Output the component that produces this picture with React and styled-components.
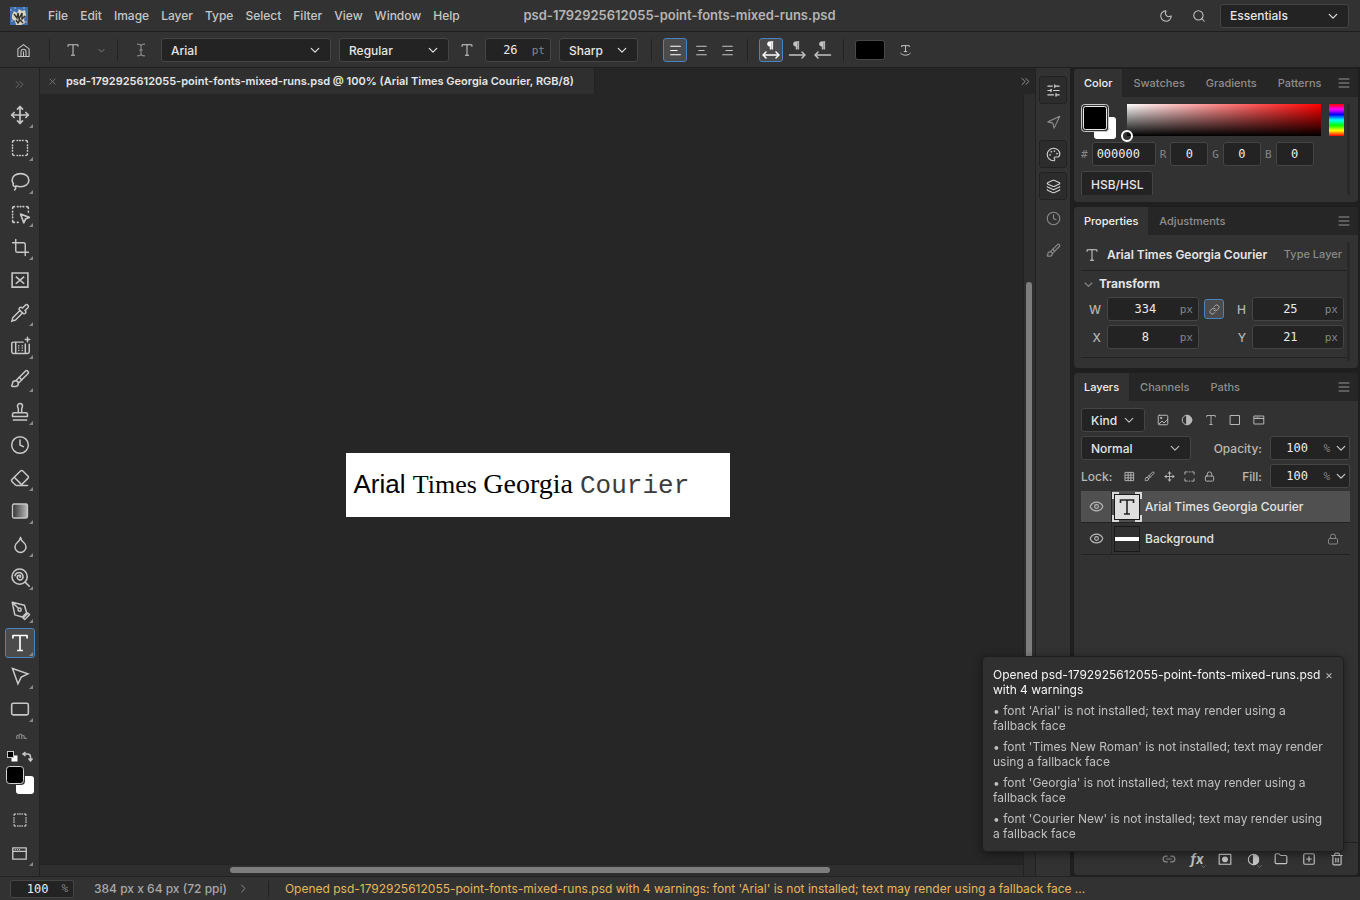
import React, { useState } from 'react';
import styled, { createGlobalStyle, css } from 'styled-components';
import {
  Search, Moon, SlidersHorizontal, Navigation, Palette, Layers, Clock, Brush, Move, Crop,
  Eraser, Droplet, Pipette, Link as LinkIcon, Link2, Lock, Eye, Trash2, Folder, SquarePlus,
} from 'lucide-react';

const mono = "'DejaVu Sans Mono', monospace";

const GlobalStyle = createGlobalStyle`
  * { box-sizing: border-box; }
  body {
    margin: 0;
    background: #323232;
    color: #dcdcdc;
    font: 500 12px/15px Inter, sans-serif;
  }
  button, input, select { font: inherit; color: inherit; margin: 0; }
  button { background: none; border: 0; padding: 0; cursor: pointer; }
  svg { display: block; flex: none; }
`;

const Shell = styled.div`
  display: grid;
  grid-template-rows: auto auto 1fr auto;
  height: 100vh;
  overflow: hidden;
`;

const MenuBar = styled.header`
  display: grid;
  grid-template-columns: 1fr auto 1fr;
  align-items: center;
  height: 32px;
  padding: 0 11px 0 10px;
  border-bottom: 1px solid #1e1e1e;
`;

const Menus = styled.nav`
  display: flex;
  align-items: center;
  color: #c6c6c6;
`;

const MenuItem = styled.button`
  padding: 0 6px;
  line-height: 24px;
`;

const Logo = styled.span`
  margin-right: 14px;
`;

const DocTitle = styled.h1`
  margin: 0;
  font-size: 13px;
  font-weight: 600;
  color: #b4b4b4;
`;

const MenuRight = styled.div`
  display: flex;
  justify-content: flex-end;
  align-items: center;
  gap: 9px;
`;

const IconButton = styled.button`
  display: grid;
  place-items: center;
  position: relative;
  width: ${({ $w }) => $w || 24}px;
  height: 24px;
  color: ${({ $dim }) => ($dim ? '#8c8c8c' : '#c4c4c4')};
  border: 1px solid transparent;
  border-radius: 3px;
  ${({ $active }) => $active && css`
    background: #4b4b4b;
    border-color: #4c82bd;
    color: #fff;
  `}
`;

const field = css`
  background: #232323;
  border: 1px solid #454545;
  border-radius: 3px;
`;

const SelectWrap = styled.span`
  position: relative;
  width: ${({ $w }) => $w}px;
  svg {
    position: absolute;
    right: 11px;
    top: 7px;
    pointer-events: none;
  }
`;

const NativeSelect = styled.select`
  ${field}
  display: block;
  appearance: none;
  width: 100%;
  height: 24px;
  padding: 0 9px;
  color: #e6e6e6;
`;

const OptionsBar = styled.div`
  display: flex;
  align-items: center;
  gap: 8px;
  height: 36px;
  padding: 1px 5px 0;
  border-bottom: 1px solid #1f1f1f;
`;

const Sep = styled.span`
  width: 1px;
  height: 22px;
  background: #222;
  margin: 0 3px 0 ${({ $wide }) => ($wide ? 5 : 0)}px;
`;

const ButtonSet = styled.div`
  display: flex;
  gap: 2px;
`;

const OptionIcon = styled.span`
  display: grid;
  place-items: center;
  width: 20px;
`;

const NumWrap = styled.label`
  ${field}
  display: flex;
  align-items: center;
  width: ${({ $w }) => $w}px;
  height: 24px;
  font: 11px ${mono};
  color: #858585;
  padding-left: 6px;
  padding-right: ${({ $arrow }) => ($arrow ? 3 : 5)}px;
  gap: ${({ $arrow }) => ($arrow ? 6 : 3)}px;
  svg { color: #c8c8c8; }
`;

const NumInput = styled.input`
  flex: 1;
  min-width: 0;
  width: 100%;
  padding: 0;
  border: 0;
  background: none;
  outline: 0;
  color: #ececec;
  font: 12px ${mono};
  text-align: center;
`;

const ColorChip = styled.button`
  width: 30px;
  height: 20px;
  background: #000;
  border: 1px solid #484848;
  border-radius: 3px;
`;

const Main = styled.div`
  display: grid;
  grid-template-columns: 40px minmax(0, 1fr) 36px 289px;
  min-height: 0;
`;

const Toolbar = styled.aside`
  display: flex;
  flex-direction: column;
  align-items: center;
  min-height: 0;
  border-right: 1px solid #222;
`;

const ToolList = styled.div`
  display: flex;
  flex-direction: column;
  flex: 1;
  gap: 3px;
  min-height: 0;
  overflow: hidden;
  width: 100%;
  padding-left: 5px;
`;

const ToolButton = styled.button`
  display: grid;
  place-items: center;
  position: relative;
  flex: none;
  width: 30px;
  height: 30px;
  color: ${({ $active, $dim }) => ($active ? '#fff' : $dim ? '#7c7c7c' : '#c8c8c8')};
  border: 1px solid ${({ $active }) => ($active ? '#4c82bd' : 'transparent')};
  background: ${({ $active }) => ($active ? '#4b4b4b' : 'none')};
  border-radius: 3px;
  ${({ $more }) => $more && css`
    &::after {
      content: '';
      position: absolute;
      right: 1px;
      bottom: 1px;
      border: 2px solid;
      border-color: transparent #8a8a8a #8a8a8a transparent;
    }
  `}
`;

const Expand = styled.button`
  height: 32px;
  color: #707070;
`;

const ToolFooter = styled.div`
  display: flex;
  flex-direction: column;
  align-items: center;
  gap: 3px;
  padding: 11px 0 8px;
`;

const SwatchSlot = styled.div`
  padding-bottom: 7px;
`;

const Document = styled.section`
  display: flex;
  flex-direction: column;
  min-width: 0;
  background: #262626;
`;

const TabStrip = styled.div`
  display: flex;
  justify-content: space-between;
  align-items: center;
  height: 26px;
  color: #a0a0a0;
  padding-right: 5px;
`;

const DocTab = styled.div`
  display: flex;
  align-items: center;
  gap: 10px;
  height: 26px;
  padding: 0 20px 0 9px;
  background: #2f2f2f;
  border-right: 1px solid #222;
  color: #e6e6e6;
  font-size: 11px;
  font-weight: 600;
  svg { color: #7c7c7c; }
`;

const Workspace = styled.div`
  position: relative;
  flex: 1;
  display: grid;
  place-items: center;
`;

const Artboard = styled.div`
  width: 384px;
  height: 64px;
  padding: 16px 8px;
  background: #fff;
  color: #000;
  font: 26px/30px 'Liberation Sans', sans-serif;
  white-space: pre;
`;

const Run = styled.span`
  font-family: ${({ $font }) => $font};
  font-size: ${({ $size }) => $size || 26}px;
  color: ${({ $color }) => $color || '#000'};
`;

const ScrollTrack = styled.div`
  position: absolute;
  background: #2e2e2e;
  ${({ $vertical }) => $vertical
    ? css`top: 0; right: 0; bottom: 0; width: 12px; border-left: 1px solid #222;`
    : css`left: 0; right: 12px; bottom: 0; height: 12px; border-top: 1px solid #222; padding: 2px 0;`}
`;

const Thumb = styled.div`
  background: #7d7d7d;
  border-radius: 3px;
  ${({ $vertical }) => $vertical
    ? css`position: absolute; left: 2px; top: 24%; width: 6px; height: 70%;`
    : css`height: 6px; width: 61%; margin-left: 190px;`}
`;

const Dock = styled.aside`
  display: flex;
  flex-direction: column;
  align-items: center;
  gap: 4px;
  padding-top: 8px;
  border-left: 1px solid #222;
  border-right: 1px solid #1f1f1f;
`;

const DockButton = styled.button`
  display: grid;
  place-items: center;
  width: 28px;
  height: 28px;
  border-radius: 3px;
  color: ${({ $open }) => ($open ? '#d2d2d2' : '#8a8a8a')};
  border: 1px solid ${({ $open }) => ($open ? '#222' : 'transparent')};
  background: ${({ $open }) => ($open ? '#2c2c2c' : 'none')};
`;

const Panels = styled.aside`
  display: flex;
  flex-direction: column;
  gap: 5px;
  min-height: 0;
  padding: 1px 2px 1px 3px;
  background: #1f1f1f;
`;

const Panel = styled.section`
  display: flex;
  flex-direction: column;
  flex: ${({ $h }) => ($h ? `0 0 ${$h}px` : 1)};
  min-height: 0;
  overflow: hidden;
  background: #323232;
  border-radius: 4px;
`;

const PanelTabs = styled.div`
  display: flex;
  align-items: center;
  height: 28px;
  flex: none;
  background: #262626;
  padding-right: 8px;
  font-size: 11px;
  svg { margin-left: auto; color: #a0a0a0; }
`;

const PanelTab = styled.button`
  height: 28px;
  padding: 0 10px;
  margin-right: 1px;
  color: ${({ $on }) => ($on ? '#f0f0f0' : '#8e8e8e')};
  background: ${({ $on }) => ($on ? '#323232' : 'none')};
`;

const PanelBody = styled.div`
  display: flex;
  flex-direction: column;
  flex: 1;
  min-height: 0;
  overflow: hidden;
  margin: ${({ $scroll }) => ($scroll ? '7px 8px 7px 7px' : '5px 8px 6px 7px')};
  ${({ $scroll }) => $scroll && css`border-right: 3px solid #292929;`}
`;

const ColorTop = styled.div`
  display: flex;
  gap: 8px;
  padding-right: 3px;
`;

const Gradient = styled.div`
  position: relative;
  flex: 1;
  height: 32px;
  background: linear-gradient(to bottom, transparent, #000), linear-gradient(to right, #fff, #f00);
  &::after {
    content: '';
    box-sizing: border-box;
    position: absolute;
    left: -6px;
    bottom: -6px;
    width: 12px;
    height: 12px;
    border: 2px solid #fff;
    border-radius: 50%;
  }
`;

const Hue = styled.div`
  width: 15px;
  height: 32px;
  background: linear-gradient(#f00, #f0f 17%, #00f 33%, #0ff 50%, #0f0 67%, #ff0 83%, #f00);
`;

const ColorFields = styled.div`
  display: flex;
  align-items: center;
  gap: 4px;
  margin-top: 2px;
`;

const ColorLabel = styled.label`
  display: flex;
  align-items: center;
  gap: 4px;
  color: #858585;
  font: 11px ${mono};
`;

const ColorInput = styled.input`
  ${field}
  width: ${({ $w }) => $w}px;
  height: 24px;
  padding: 0 4px;
  color: #ececec;
  font: 12px ${mono};
  text-align: ${({ $w }) => ($w > 50 ? 'left' : 'center')};
`;

const TextButton = styled.button`
  ${field}
  flex: none;
  align-self: flex-start;
  height: 26px;
  margin-top: 5px;
  padding: 0 9px;
  color: #e6e6e6;
`;

const LayerSummary = styled.div`
  display: flex;
  align-items: center;
  gap: 8px;
  height: 29px;
  flex: none;
  padding: 0 5px 3px 4px;
  border-bottom: 1px solid #222;
  strong { font-weight: 600; color: #e4e4e4; }
  small { margin-left: auto; font-size: 11px; color: #8a8a8a; }
`;

const SectionTitle = styled.h2`
  display: flex;
  align-items: center;
  gap: 6px;
  margin: 5px 0 5px 3px;
  font-size: 12px;
  line-height: 16px;
  font-weight: 700;
  color: #e4e4e4;
  svg { color: #8a8a8a; }
`;

const TransformGrid = styled.div`
  display: grid;
  grid-template-columns: 14px 92px 20px 1fr 92px;
  column-gap: 5px;
  row-gap: 4px;
  align-items: center;
  padding: 0 3px 8px 7px;
  border-bottom: 1px solid #222;
  color: #b4b4b4;
  > span { text-align: right; padding-right: 1px; }
`;

const LinkButton = styled.button`
  display: grid;
  place-items: center;
  width: 20px;
  height: 20px;
  background: #4b4b4b;
  border: 1px solid #4c82bd;
  border-radius: 3px;
  color: #b0b0b0;
`;

const LayerRow = styled.div`
  display: flex;
  align-items: center;
  height: 28px;
  flex: none;
  color: #b8b8b8;
`;

const FilterIcons = styled.div`
  display: flex;
  gap: ${({ $gap }) => $gap}px;
  margin-left: 12px;
`;

const Push = styled.span`
  margin-left: auto;
  margin-right: 8px;
`;

const LayerList = styled.ul`
  flex: 1;
  margin: 1px 0 0;
  padding: 0;
  list-style: none;
`;

const LayerItem = styled.li`
  display: flex;
  align-items: center;
  height: 32px;
  border-bottom: 1px solid #222;
  background: ${({ $selected }) => ($selected ? '#505050' : 'none')};
  color: #e4e4e4;
  > svg { margin-left: auto; margin-right: 11px; color: #858585; }
`;

const EyeButton = styled.button`
  display: grid;
  place-items: center;
  width: 31px;
  height: 32px;
  border-right: 1px solid #262626;
  color: #b8b8b8;
`;

const ThumbBox = styled.span`
  margin-right: 3px;
`;

const PanelFooter = styled.footer`
  display: flex;
  justify-content: flex-end;
  align-items: center;
  gap: 4px;
  height: 33px;
  padding: 0 9px;
  border-top: 1px solid #222;
`;

const Fx = styled.span`
  font: italic 700 13px/16px Inter, sans-serif;
`;

const MoreMark = styled.span`
  position: absolute;
  right: 2px;
  bottom: 1px;
  color: #8a8a8a;
`;

const StatusBar = styled.footer`
  display: flex;
  align-items: center;
  height: 24px;
  padding-left: 10px;
  border-top: 1px solid #222;
  color: #a8a8a8;
  white-space: nowrap;
`;

const ZoomField = styled(NumWrap)`
  height: 18px;
  border-radius: 2px;
  margin-right: 20px;
`;

const StatusSep = styled.span`
  width: 1px;
  height: 16px;
  margin: 0 16px 0 7px;
  background: #222;
`;

const Warning = styled.output`
  font-weight: 400;
  color: #e4b75c;
`;

const Toast = styled.div`
  position: fixed;
  right: 16px;
  bottom: 48px;
  width: 362px;
  padding: 10px;
  background: #303030;
  border: 1px solid #1f1f1f;
  border-radius: 5px;
  box-shadow: 0 2px 8px rgba(0, 0, 0, 0.45);
  color: #c0c0c0;
  font-weight: 400;
  p { margin: 6px 8px 0 0; }
`;

const ToastTitle = styled.div`
  display: flex;
  align-items: flex-start;
  justify-content: space-between;
  color: #f6f6f6;
  button { color: #b8b8b8; }
`;

/* ---- icons ---- */

const Svg = ({ size = 20, w = 1.6, children, ...rest }) => (
  <svg width={size} height={size} viewBox="0 0 24 24" fill="none" stroke="currentColor"
    strokeWidth={w} strokeLinecap="round" strokeLinejoin="round" {...rest}>{children}</svg>
);

const Chevron = ({ size = 10 }) => <Svg size={size} w={3}><path d="M3 8l9 9 9-9" /></Svg>;
const Close = ({ size = 7 }) => <Svg size={size} w={3}><path d="M3 3l18 18M21 3L3 21" /></Svg>;
const Chevrons = ({ size = 9 }) => <Svg size={size} w={2.4}><path d="M3 4l8 8-8 8M13 4l8 8-8 8" /></Svg>;
const TypeIcon = (p) => <Svg {...p}><path d="M3.500 6.500V3h17v3.500M12 3v18M8.500 21h7" strokeLinecap="butt" /></Svg>;
const Home = () => <Svg size={15} w={1.7}><path d="M3 9.500L12 2.500l9 7V21.500H3zM8 21.500V14a4 4 0 0 1 8 0v7.500M12 14v7" /></Svg>;
const IBeam = () => <Svg size={14} w={1.9}><path d="M6 2c3 0 6 1 6 3 0-2 3-3 6-3M12 5v14M6 22c3 0 6-1 6-3 0 2 3 3 6 3M9.500 12h5" /></Svg>;
const Menu = () => <Svg size={12} w={1.8}><path d="M2 4h20M2 12h20M2 20h20" /></Svg>;

const Align = ({ kind }) => {
  const mid = { left: 'M3 12h12', center: 'M7 12h10', right: 'M9 12h12' }[kind];
  return <Svg size={13} w={1.9}><path d={`M3 4h18${mid}M3 20h18`} /></Svg>;
};

const Para = ({ dir }) => (
  <Svg size={20} w={1.8}>
    <path d="M14 2h-3.500a2.700 2.700 0 0 0 0 5.500H11V11h1V3h1v8h1V2z" fill="currentColor" strokeWidth="0.8" />
    <path d="M3 18h18" />
    {dir !== 'ltr' && <path d="M6 14.500L2.500 18 6 21.500" />}
    {dir !== 'rtl' && <path d="M18 14.500l3.500 3.500-3.500 3.500" />}
  </Svg>
);

const Warp = () => <Svg size={13} w={1.8}><path d="M5 5V3h14v2M12 3v11M9.500 14h5M3 17c4 5 14 5 18 0" /></Svg>;
const Dashed = ({ size = 20 }) => (
  <Svg size={size} w={1.9}>
    <path d="M3 5a2 2 0 0 1 2-2M19 3a2 2 0 0 1 2 2M21 19a2 2 0 0 1-2 2M5 21a2 2 0 0 1-2-2M8.500 3h.7M11.700 3h.7M15 3h.7M8.500 21h.7M11.700 21h.7M15 21h.7M3 8.500v.7M3 11.700v.7M3 15v.7M21 8.500v.7M21 11.700v.7M21 15v.7" />
  </Svg>
);
const ObjectSelect = () => (
  <Svg size={21} w={1.9}>
    <path d="M3 5a2 2 0 0 1 2-2M19 3a2 2 0 0 1 2 2M5 21a2 2 0 0 1-2-2M8.500 3h.7M11.700 3h.7M15 3h.7M8.500 21h.7M3 8.500v.7M3 11.700v.7M3 15v.7M21 8.500v.7" />
    <path d="M12 11.500l10 3.800-4.300 1.900-2 4.300z" />
  </Svg>
);
const LassoTool = () => <Svg size={21} w={1.8}><path d="M3.700 14C2.900 13 2.500 12 2.500 10.500c0-4.500 4-7.500 9.500-7.500s9.500 3 9.500 7.500-4 7.500-9.500 7.500c-2 0-3.500-.3-5-1M4 14.300a2 2 0 1 0 3 2.700M6.500 17.500c.3 1.600-.2 3.200-1.200 4.200" /></Svg>;
const FrameTool = () => <Svg w={1.9}><path d="M2.500 3.500h19v17h-19zM7 8l10 8.500M17 8L7 16.500" strokeLinecap="butt" strokeLinejoin="miter" /></Svg>;
const PatchTool = () => (
  <Svg size={21} w={1.7}>
    <path d="M15 7H4A2 2 0 0 0 2 9v9a2 2 0 0 0 2 2h16a2 2 0 0 0 2-2V9.500M6.500 7v13M17.500 9v11M20 1.500v5M17.500 4h5" />
    <path d="M10 11v.1M14 11v.1M10 13.700v.1M14 13.700v.1M10 16.500v.1M14 16.500v.1" />
  </Svg>
);
const StampTool = () => <Svg w={1.8}><path d="M10 13V8.500C10 7 9 6.500 9 4.800a3 3 0 0 1 6 0c0 1.700-1 2.200-1 3.700V13M5 13h14a2 2 0 0 1 2 2v2.500H3V15a2 2 0 0 1 2-2zM4 21.500h16" /></Svg>;
const GradientTool = () => (
  <svg width="20" height="20" viewBox="0 0 20 20">
    <defs>
      <linearGradient id="toolGrad"><stop offset="0" stopColor="#333" /><stop offset="1" stopColor="#bbb" /></linearGradient>
    </defs>
    <rect x="2.500" y="3" width="15" height="14" rx="1.500" fill="url(#toolGrad)" stroke="#c8c8c8" strokeWidth="1.300" />
  </svg>
);
const DodgeTool = () => <Svg size={21} w={1.8}><circle cx="11" cy="11" r="8.700" /><path d="M17.300 17.300L22 22M11 11.500c1.200.2 1.700-1.500.3-2-2-.6-3.600 1.300-3 3.200.8 2.400 4 2.700 5.600.9 2-2.400.8-6-2-7-2.500-.8-5.500.5-6.300 3.400" /></Svg>;
const PenTool = () => <Svg size={21} w={1.7}><path d="M2.500 2.500l14 3.500 2.500 8.500-5 5L5.500 17zM2.500 2.500L9.500 9.500M15 20.500l5.500-5.500 1.800 1.800-5.500 5.500z" /><circle cx="11" cy="11" r="1.800" /></Svg>;
const CursorTool = () => <Svg w={1.8}><path d="M3 3l18.500 6.500-8 3.800-4 8z" strokeLinejoin="miter" /></Svg>;
const RectTool = () => <Svg w={1.9}><rect x="2" y="5" width="20" height="14" rx="2" /></Svg>;
const HandTool = () => <Svg><path d="M4 13.500c-1.500-2-1-3.500 1-2.500l3 3M8 13V5.500a1.500 1.500 0 0 1 3 0V12M11 12V4a1.500 1.500 0 0 1 3 0v8M14 12V5.500a1.500 1.500 0 0 1 3 0V13M17 13V9a1.500 1.500 0 0 1 3 0v7" /></Svg>;
const ScreenMode = ({ size = 17 }) => <Svg size={size} w={1.9}><path d="M2.500 4h19v16h-19zM2.500 9h19M6 6.500h.1M9 6.500h.1M12 6.500h.1" /></Svg>;
const HalfCircle = ({ size = 13 }) => <Svg size={size} w={2}><circle cx="12" cy="12" r="9.500" /><path d="M12 2.500a9.500 9.500 0 0 1 0 19z" fill="currentColor" /></Svg>;
const Picture = () => <Svg size={12} w={2}><rect x="2.500" y="2.500" width="19" height="19" rx="2" /><circle cx="8" cy="8" r="1.500" /><path d="M4 20l6-6 4 4 7-7" /></Svg>;
const Square = () => <Svg size={12} w={2}><rect x="3" y="3" width="18" height="18" /></Svg>;
const Grid = () => <Svg size={11} w={2}><path d="M3 3h18v18H3zM9 3v18M15 3v18M3 9h18M3 15h18" /></Svg>;
const Corners = () => <Svg size={11} w={2}><path d="M2 7V2h5M17 2h5v5M22 17v5h-5M7 22H2v-5M11 2h2M11 22h2" /></Svg>;
const MoveSolid = () => <Svg size={11} w={2}><path d="M12 3v18M3 12h18" /><path d="M9 5l3-4 3 4zM9 19l3 4 3-4zM5 9l-4 3 4 3zM19 9l4 3-4 3z" fill="currentColor" strokeWidth="1" /></Svg>;
const Mask = () => <Svg size={14} w={2}><rect x="2" y="4" width="20" height="17" /><circle cx="12" cy="12.500" r="4" fill="currentColor" /></Svg>;

const AppLogo = () => (
  <svg width="18" height="18" viewBox="0 0 18 18">
    <rect width="18" height="18" fill="#3d6cb0" />
    <path d="M2 8l2-4 3 2 2-4 3 2 3-1 1 5-2 4 1 4-4 2H6l-1-4-3-2z" fill="#d9d3c4" />
    <path d="M4 7l3 4 1-5 1 6 3-6v6l3-3M6 13l2 3 2-3 3 3" stroke="#34302c" strokeWidth="1.400" fill="none" />
    <path d="M0 3h2M4 1h2M13 1h2M15 15h2M1 14h2" stroke="#9db8dc" strokeWidth="1.200" />
  </svg>
);

const ColorSwatches = ({ small }) => (
  <svg width={small ? 30 : 38} height={small ? 30 : 36} viewBox={small ? '0 0 30 30' : '0 0 38 36'}>
    {small ? (
      <>
        <rect x="11" y="11" width="18" height="18" rx="3" fill="#fff" />
        <rect x="1" y="1" width="18" height="18" rx="3" fill="#000" stroke="#323232" strokeWidth="2" />
        <rect x="1.500" y="1.500" width="17" height="17" rx="3" fill="#000" stroke="#d0d0d0" />
      </>
    ) : (
      <>
        <rect x="13" y="13" width="22" height="22" rx="3" fill="#fff" />
        <rect x="0.500" y="0.500" width="27" height="27" rx="3" fill="#323232" stroke="#c8c8c8" />
        <rect x="2.500" y="2.500" width="23" height="23" rx="2" fill="#000" stroke="#e8e8e8" />
      </>
    )}
  </svg>
);

const SwapRow = () => (
  <svg width="28" height="12" viewBox="0 0 28 12">
    <rect x="5.500" y="5.500" width="6" height="6" fill="#fff" />
    <rect x="1.500" y="1.500" width="6" height="6" fill="#000" stroke="#c8c8c8" />
    <path d="M18 4h3.500a3 3 0 0 1 3 3v3M19.500 2L17 4l2.500 2M22.500 8.500l2 2.500 2-2.500" fill="none" stroke="#c8c8c8" strokeWidth="1.500" />
  </svg>
);

const TypeThumb = () => (
  <svg width="30" height="30" viewBox="0 0 30 30">
    <rect x="2.500" y="2.500" width="25" height="25" fill="#dedede" stroke="#1a1a1a" />
    <path d="M8.500 11V8h13v3M15 8v14M12 22h6" fill="none" stroke="#222" strokeWidth="1.600" />
    <path d="M1 7V1h6M23 1h6v6M29 23v6h-6M7 29H1v-6" fill="none" stroke="#d8d8d8" strokeWidth="2" />
  </svg>
);

const BackgroundThumb = () => (
  <svg width="30" height="30" viewBox="0 0 30 30">
    <rect x="2.500" y="2.500" width="25" height="25" fill="#303030" stroke="#1a1a1a" />
    <rect x="3" y="13" width="24" height="4" fill="#fff" />
  </svg>
);

/* ---- controls ---- */

const Select = ({ label, width, value }) => (
  <SelectWrap $w={width}>
    <NativeSelect aria-label={label} defaultValue={value}>
      <option>{value}</option>
    </NativeSelect>
    <Chevron />
  </SelectWrap>
);

const Num = ({ label, width, value, unit, arrow }) => (
  <NumWrap $w={width} $arrow={arrow}>
    <NumInput aria-label={label} defaultValue={value} />
    {unit}
    {arrow && <Chevron />}
  </NumWrap>
);

const menus = ['File', 'Edit', 'Image', 'Layer', 'Type', 'Select', 'Filter', 'View', 'Window', 'Help'];

const tools = [
  { name: 'Move', icon: <Move size={20} strokeWidth={2} />, more: true },
  { name: 'Marquee', icon: <Dashed />, more: true },
  { name: 'Lasso', icon: <LassoTool />, more: true },
  { name: 'Object selection', icon: <ObjectSelect />, more: true },
  { name: 'Crop', icon: <Crop size={19} strokeWidth={1.8} />, more: true },
  { name: 'Frame', icon: <FrameTool /> },
  { name: 'Eyedropper', icon: <Pipette size={20} strokeWidth={1.8} />, more: true },
  { name: 'Patch', icon: <PatchTool />, more: true },
  { name: 'Brush', icon: <Brush size={20} strokeWidth={1.8} />, more: true },
  { name: 'Clone stamp', icon: <StampTool />, more: true },
  { name: 'History brush', icon: <Clock size={20} strokeWidth={1.8} /> },
  { name: 'Eraser', icon: <Eraser size={20} strokeWidth={1.8} />, more: true },
  { name: 'Gradient', icon: <GradientTool />, more: true },
  { name: 'Blur', icon: <Droplet size={19} strokeWidth={1.9} />, more: true },
  { name: 'Dodge', icon: <DodgeTool />, more: true },
  { name: 'Pen', icon: <PenTool />, more: true },
  { name: 'Type', icon: <TypeIcon size={20} w={2} />, more: true },
  { name: 'Path selection', icon: <CursorTool />, more: true },
  { name: 'Rectangle', icon: <RectTool />, more: true },
  { name: 'Hand', icon: <HandTool />, dim: true },
];

const dockItems = [
  { name: 'Properties', Icon: SlidersHorizontal, open: true },
  { name: 'Navigator', Icon: Navigation },
  { name: 'Color', Icon: Palette, open: true },
  { name: 'Layers', Icon: Layers, open: true },
  { name: 'History', Icon: Clock },
  { name: 'Brushes', Icon: Brush },
];

const missingFonts = ['Arial', 'Times New Roman', 'Georgia', 'Courier New'];
const fileName = 'psd-1792925612055-point-fonts-mixed-runs.psd';
const fontWarning = (font) => `font '${font}' is not installed; text may render using a fallback face`;

const Tabs = ({ items }) => (
  <PanelTabs>
    {items.map((item, i) => <PanelTab key={item} $on={i === 0}>{item}</PanelTab>)}
    <Menu />
  </PanelTabs>
);

const App = () => {
  const [tool, setTool] = useState('Type');
  const [toast, setToast] = useState(true);

  return (
    <Shell>
      <GlobalStyle />
      <MenuBar>
        <Menus>
          <Logo><AppLogo /></Logo>
          {menus.map((m) => <MenuItem key={m}>{m}</MenuItem>)}
        </Menus>
        <DocTitle>{fileName}</DocTitle>
        <MenuRight>
          <IconButton aria-label="Theme"><Moon size={14} strokeWidth={1.8} /></IconButton>
          <IconButton aria-label="Search"><Search size={14} strokeWidth={1.8} /></IconButton>
          <Select label="Workspace" width={129} value="Essentials" />
        </MenuRight>
      </MenuBar>

      <OptionsBar>
        <IconButton aria-label="Home" $w={36}><Home /></IconButton>
        <Sep />
        <IconButton aria-label="Type tool"><TypeIcon size={14} w={1.8} /></IconButton>
        <IconButton aria-label="Presets" $dim $w={16}><Chevron size={7} /></IconButton>
        <Sep />
        <IconButton aria-label="Orientation" $dim><IBeam /></IconButton>
        <Select label="Font" width={170} value="Arial" />
        <Select label="Style" width={110} value="Regular" />
        <OptionIcon><TypeIcon size={14} w={1.6} /></OptionIcon>
        <Num label="Size" width={66} value="26" unit="pt" />
        <Select label="Anti-aliasing" width={79} value="Sharp" />
        <Sep $wide />
        <ButtonSet>
          <IconButton aria-label="Align left" $active><Align kind="left" /></IconButton>
          <IconButton aria-label="Align center"><Align kind="center" /></IconButton>
          <IconButton aria-label="Align right"><Align kind="right" /></IconButton>
        </ButtonSet>
        <Sep />
        <ButtonSet>
          <IconButton aria-label="Auto direction" $active><Para dir="both" /></IconButton>
          <IconButton aria-label="Left to right"><Para dir="ltr" /></IconButton>
          <IconButton aria-label="Right to left"><Para dir="rtl" /></IconButton>
        </ButtonSet>
        <Sep />
        <ColorChip aria-label="Text color" />
        <IconButton aria-label="Warp text"><Warp /></IconButton>
      </OptionsBar>

      <Main>
        <Toolbar>
          <Expand aria-label="Expand toolbar"><Chevrons /></Expand>
          <ToolList>
            {tools.map((t) => (
              <ToolButton key={t.name} aria-label={t.name} $more={t.more} $dim={t.dim} $active={tool === t.name} onClick={() => setTool(t.name)}>
                {t.icon}
              </ToolButton>
            ))}
          </ToolList>
          <ToolFooter>
            <SwapRow />
            <SwatchSlot><ColorSwatches small /></SwatchSlot>
            <ToolButton aria-label="Quick mask"><Dashed size={16} /></ToolButton>
            <ToolButton aria-label="Screen mode" $more><ScreenMode /></ToolButton>
          </ToolFooter>
        </Toolbar>

        <Document>
          <TabStrip>
            <DocTab>
              <Close />
              {`${fileName} @ 100% (Arial Times Georgia Courier, RGB/8)`}
            </DocTab>
            <Chevrons />
          </TabStrip>
          <Workspace>
            <Artboard>
              {'Arial '}
              <Run $font="'Liberation Serif', serif">{'Times '}</Run>
              <Run $font="'Liberation Serif', serif" $size={28}>{'Georgia '}</Run>
              <Run $font="'Liberation Mono', monospace" $color="#3c3c3c">Courier</Run>
            </Artboard>
            <ScrollTrack $vertical><Thumb $vertical /></ScrollTrack>
            <ScrollTrack><Thumb /></ScrollTrack>
          </Workspace>
        </Document>

        <Dock>
          {dockItems.map(({ name, Icon, open }) => (
            <DockButton key={name} aria-label={name} $open={open}><Icon size={15} strokeWidth={1.8} /></DockButton>
          ))}
        </Dock>

        <Panels>
          <Panel $h={133}>
            <Tabs items={['Color', 'Swatches', 'Gradients', 'Patterns']} />
            <PanelBody $scroll>
              <ColorTop>
                <ColorSwatches />
                <Gradient />
                <Hue />
              </ColorTop>
              <ColorFields>
                <ColorLabel>#<ColorInput $w={64} defaultValue="000000" /></ColorLabel>
                <ColorLabel>R<ColorInput $w={38} defaultValue="0" /></ColorLabel>
                <ColorLabel>G<ColorInput $w={38} defaultValue="0" /></ColorLabel>
                <ColorLabel>B<ColorInput $w={38} defaultValue="0" /></ColorLabel>
              </ColorFields>
              <TextButton>HSB/HSL</TextButton>
            </PanelBody>
          </Panel>

          <Panel $h={161}>
            <Tabs items={['Properties', 'Adjustments']} />
            <PanelBody $scroll>
              <LayerSummary>
                <TypeIcon size={14} w={1.6} />
                <strong>Arial Times Georgia Courier</strong>
                <small>Type Layer</small>
              </LayerSummary>
              <SectionTitle><Chevron size={9} />Transform</SectionTitle>
              <TransformGrid>
                <span>W</span>
                <Num label="Width" value="334" unit="px" width={92} />
                <LinkButton aria-label="Link width and height"><LinkIcon size={11} /></LinkButton>
                <span>H</span>
                <Num label="Height" value="25" unit="px" width={92} />
                <span>X</span>
                <Num label="X position" value="8" unit="px" width={92} />
                <span />
                <span>Y</span>
                <Num label="Y position" value="21" unit="px" width={92} />
              </TransformGrid>
            </PanelBody>
          </Panel>

          <Panel>
            <Tabs items={['Layers', 'Channels', 'Paths']} />
            <PanelBody>
              <LayerRow>
                <Select label="Filter kind" width={64} value="Kind" />
                <FilterIcons $gap={12}>
                  <Picture /><HalfCircle size={12} /><TypeIcon size={12} w={1.8} /><Square /><ScreenMode size={12} />
                </FilterIcons>
              </LayerRow>
              <LayerRow>
                <Select label="Blend mode" width={110} value="Normal" />
                <Push>Opacity:</Push>
                <Num label="Opacity" value="100" unit="%" width={80} arrow />
              </LayerRow>
              <LayerRow>
                Lock:
                <FilterIcons $gap={9}>
                  <Grid /><Brush size={11} /><MoveSolid /><Corners /><Lock size={11} />
                </FilterIcons>
                <Push>Fill:</Push>
                <Num label="Fill" value="100" unit="%" width={80} arrow />
              </LayerRow>
              <LayerList>
                <LayerItem $selected>
                  <EyeButton aria-label="Toggle layer"><Eye size={15} strokeWidth={1.8} /></EyeButton>
                  <ThumbBox><TypeThumb /></ThumbBox>
                  Arial Times Georgia Courier
                </LayerItem>
                <LayerItem>
                  <EyeButton aria-label="Toggle background"><Eye size={15} strokeWidth={1.8} /></EyeButton>
                  <ThumbBox><BackgroundThumb /></ThumbBox>
                  Background
                  <Lock size={12} />
                </LayerItem>
              </LayerList>
            </PanelBody>
            <PanelFooter>
              <IconButton aria-label="Link layers" $dim><Link2 size={14} /></IconButton>
              <IconButton aria-label="Layer style"><Fx>fx</Fx><MoreMark><Chevron size={5} /></MoreMark></IconButton>
              <IconButton aria-label="Add mask"><Mask /></IconButton>
              <IconButton aria-label="Adjustment layer"><HalfCircle /><MoreMark><Chevron size={5} /></MoreMark></IconButton>
              <IconButton aria-label="New group"><Folder size={14} /></IconButton>
              <IconButton aria-label="New layer"><SquarePlus size={14} /></IconButton>
              <IconButton aria-label="Delete layer"><Trash2 size={14} /></IconButton>
            </PanelFooter>
          </Panel>
        </Panels>
      </Main>

      <StatusBar>
        <ZoomField $w={64}>
          <NumInput aria-label="Zoom" defaultValue="100" />%
        </ZoomField>
        384 px x 64 px (72 ppi)
        <IconButton aria-label="Document info" $dim $w={34}>
          <Svg size={9} w={2.6}><path d="M7 3l9 9-9 9" /></Svg>
        </IconButton>
        <StatusSep />
        <Warning>{`Opened ${fileName} with 4 warnings: ${fontWarning('Arial')} ...`}</Warning>
      </StatusBar>

      {toast && (
        <Toast role="status">
          <ToastTitle>
            <span>{`Opened ${fileName} with 4 warnings`}</span>
            <button aria-label="Dismiss" onClick={() => setToast(false)}>×</button>
          </ToastTitle>
          {missingFonts.map((font) => <p key={font}>{`• ${fontWarning(font)}`}</p>)}
        </Toast>
      )}
    </Shell>
  );
};

export default App;
